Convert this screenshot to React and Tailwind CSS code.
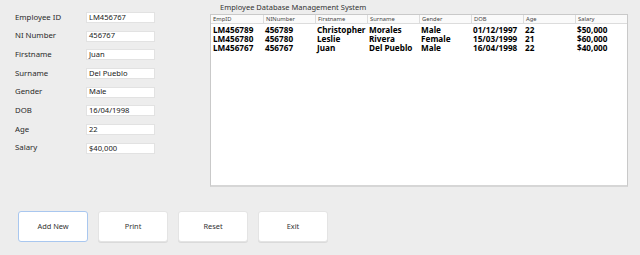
const fields = [
  ['Employee ID', 'LM456767'],
  ['NI Number', '456767'],
  ['Firstname', 'Juan'],
  ['Surname', 'Del Pueblo'],
  ['Gender', 'Male'],
  ['DOB', '16/04/1998'],
  ['Age', '22'],
  ['Salary', '$40,000'],
]

const columns = ['EmpID', 'NINumber', 'Firstname', 'Surname', 'Gender', 'DOB', 'Age', 'Salary']

const rows = [
  ['LM456789', '456789', 'Christopher', 'Morales', 'Male', '01/12/1997', '22', '$50,000'],
  ['LM456780', '456780', 'Leslie', 'Rivera', 'Female', '15/03/1999', '21', '$60,000'],
  ['LM456767', '456767', 'Juan', 'Del Pueblo', 'Male', '16/04/1998', '22', '$40,000'],
]

const buttons = ['Add New', 'Print', 'Reset', 'Exit']

export default function App() {
  return (
    <div
      className="w-[640px] h-[255px] bg-[#ededed] text-[#222] overflow-hidden"
      style={{ fontFamily: '"Noto Sans", "DejaVu Sans", sans-serif' }}
    >
      <div className="flex pt-[3px]">
        {/* Form fields */}
        <div className="w-[210px] pl-[15px] pt-[9px] flex flex-col gap-[7.7px]">
          {fields.map(([label, value]) => (
            <div key={label} className="flex items-center h-[11px]">
              <span className="w-[71px] text-[7.8px] leading-none text-[#2a2a2a]">{label}</span>
              <div className="w-[69px] h-[11px] bg-white border border-[#e2e2e2] flex items-center pl-[2px] text-[7.6px] leading-none text-[#222]">
                {value}
              </div>
            </div>
          ))}
        </div>

        {/* Table */}
        <div className="flex flex-col">
          <div className="pl-[10px] h-[11px] text-[7.5px] leading-[9px] text-[#333]">
            Employee Database Management System
          </div>
          <div className="w-[418px] h-[173px] bg-white border border-[#c9c9c9] border-b-[#d6d6d6] border-b-2">
            <div className="grid grid-cols-8 h-[9px] border-b border-[#dcdcdc] bg-[#fafafa]">
              {columns.map((c, i) => (
                <div
                  key={c}
                  className={`pl-[2px] text-[5.8px] leading-[9px] text-[#444] ${i > 0 ? 'border-l border-[#dcdcdc]' : ''}`}
                >
                  {c}
                </div>
              ))}
            </div>
            <div className="pt-[2px]">
              {rows.map((r) => (
                <div key={r[0]} className="grid grid-cols-8 h-[8.7px] items-center">
                  {r.map((v, i) => (
                    <div key={i} className="pl-[2px] text-[8.2px] leading-none font-bold text-black whitespace-nowrap">
                      {v}
                    </div>
                  ))}
                </div>
              ))}
            </div>
          </div>
        </div>
      </div>

      {/* Buttons */}
      <div className="flex gap-[10px] pl-[18px] mt-[24px]">
        {buttons.map((b, i) => (
          <button
            key={b}
            className={`w-[70px] h-[31px] bg-white rounded-[3px] text-[7.4px] text-[#333] border ${
              i === 0 ? 'border-[#a9c7ef]' : 'border-[#e4e4e4] shadow-[0_1px_0_#dadada]'
            }`}
          >
            {b}
          </button>
        ))}
      </div>
    </div>
  )
}
